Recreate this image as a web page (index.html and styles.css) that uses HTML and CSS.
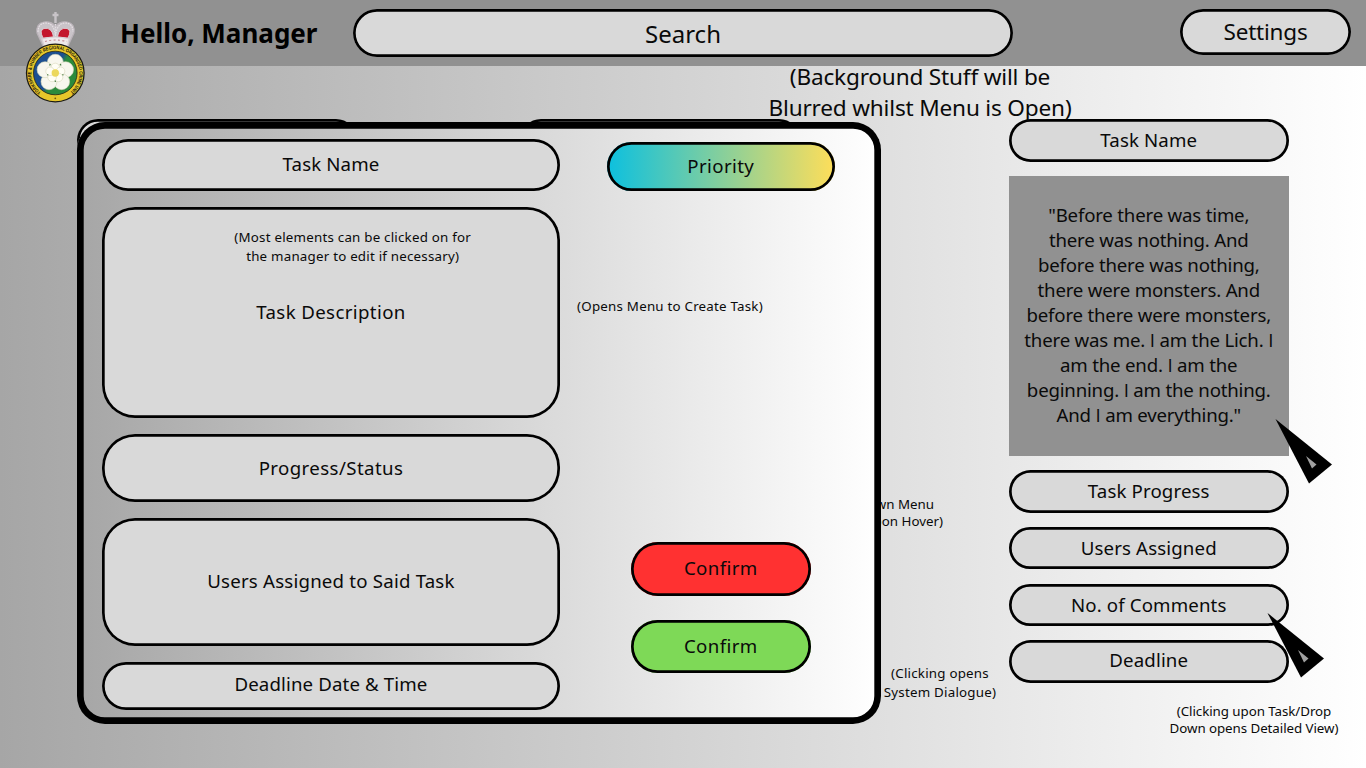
FILE: index.html
```html
<!DOCTYPE html>
<html lang="en">
<head>
<meta charset="utf-8">
<title>Manager Dashboard</title>
<link rel="stylesheet" href="styles.css">
</head>
<body>
<header class="topbar">
  <svg class="crest" viewBox="0 0 64 96" width="64" height="96">
    <defs>
      <path id="ring" d="M17 84.4 A24 24 0 1 1 45.600 84.4"/>
      <clipPath id="disc"><circle cx="31.3" cy="65" r="21"/></clipPath>
      <linearGradient id="field" x1="0" x2="1" y1=".2" y2=".8">
        <stop offset=".45" stop-color="#1d4f91"/><stop offset=".55" stop-color="#2c8a3c"/>
      </linearGradient>
    </defs>
    <g stroke="#b9b2b8" stroke-width="1.2">
      <path fill="#c9c3c8" d="M19 38 L13 25 Q11.500 15.500 20 14 Q27 13 31.5 18 Q36 13 43 14 Q51.500 15.500 50 25 L44 38 Z"/>
      <path fill="#c3162c" stroke="#ded8dc" stroke-width=".8" d="M19 30 Q15 22 20 20.500 Q28 19 29.500 29 Z M44 30 Q48 22 43 20.500 Q35 19 33.500 29 Z"/>
      <path fill="none" stroke="#e5e0e4" stroke-dasharray="1.6 1" d="M14 24 Q14 15 22 15 Q30 15 31.5 28 Q33 15 41 15 Q49 15 49 24 M31.5 16 V34"/>
      <path stroke="#c8c4c8" stroke-width="2.400" d="M31.5 4 V15 M28.5 7 H34.5"/>
      <path fill="#eee8ea" stroke="#d8d0d4" d="M18 31 Q31 27 45 31 L43.500 38 Q31 34.500 20 38 Z"/>
    </g>
    <path d="M21 33.500 Q31 30.500 43 33.500" fill="none" stroke="#c58c96" stroke-width="1.2" stroke-dasharray="2 2.400"/>
    <circle cx="31.3" cy="65" r="28.800" fill="#e6c62a" stroke="#1b1a12" stroke-width="1.300"/>
    <circle cx="31.3" cy="65" r="21.8" fill="url(#field)" stroke="#252515" stroke-width=".8"/>
    <g clip-path="url(#disc)">
      <g fill="#f8f7ee" stroke="#d5d8b8" stroke-width=".6">
        <circle cx="31.300" cy="54.3" r="8"/><circle cx="41.5" cy="61.7" r="8"/>
        <circle cx="37.6" cy="73.700" r="8"/><circle cx="25" cy="73.700" r="8"/>
        <circle cx="21.100" cy="61.7" r="8"/>
      </g>
      <g fill="#fffef5" stroke="#d8d9bc" stroke-width=".6">
        <circle cx="31.300" cy="59.5" r="4.300"/><circle cx="36.5" cy="63.300" r="4.300"/>
        <circle cx="34.5" cy="69.400" r="4.300"/><circle cx="28.100" cy="69.400" r="4.300"/>
        <circle cx="26.100" cy="63.300" r="4.300"/>
      </g>
      <g stroke="#4b7d45" stroke-width="1.200">
        <path d="M36.300 56 L37 57.500 M39.500 67 L38.300 66.700 M31.300 74 V72.500 M23.100 67 L24.300 66.700 M26.300 56 L25.600 57.500"/>
      </g>
      <circle cx="31.3" cy="65" r="3.700" fill="#ecd85d"/>
    </g>
    <text class="crest-text"><textPath href="#ring" textLength="119" lengthAdjust="spacingAndGlyphs">YORKSHIRE &amp; HUMBER REGIONAL ORGANISED CRIME UNIT</textPath></text>
    <circle cx="31.3" cy="90.3" r=".9" fill="#6b5c12"/>
  </svg>
  <h1 class="greeting">Hello, Manager</h1>
  <div class="pill search">Search</div>
  <div class="pill settings">Settings</div>
</header>

<main class="board">
  <div class="pill task-head task-head-first"></div>
  <div class="pill task-head task-head-second"></div>
  <p class="note note-hover">Down Menu<br><span class="hover-end">upon Hover)</span></p>
  <p class="note note-dialogue">(Clicking opens<br>System Dialogue)</p>
  <p class="note note-blur">(Background Stuff will be<br>Blurred whilst Menu is Open)</p>

  <section class="task">
    <div class="pill row">Task Name</div>
    <blockquote class="quote">"Before there was time,<br>there was nothing. And<br>before there was nothing,<br>there were monsters. And<br>before there were monsters,<br>there was me. <span class="plain">I</span> am the Lich. <span class="plain">I</span><br>am the end. <span class="plain">I</span> am the<br>beginning. <span class="plain">I</span> am the nothing.<br>And <span class="plain">I</span> am everything."</blockquote>
    <div class="pill row">Task Progress</div>
    <div class="pill row">Users Assigned</div>
    <div class="pill row row-comments">No. of Comments</div>
    <div class="pill row row-deadline">Deadline</div>
  </section>
  <p class="note note-detail">(Clicking upon Task/Drop<br>Down opens Detailed View)</p>

  <svg class="cursor cursor-quote" viewBox="0 0 58 66" width="58" height="66"><path d="M.5 0 L57 45.500 L34 64.500 Z"/><path class="cursor-hole" d="M31 37 L41.500 45.500 L37 49.500 Z"/></svg>
  <svg class="cursor cursor-comments" viewBox="0 0 58 66" width="58" height="66"><path d="M.5 0 L57 45.500 L34 64.500 Z"/><path class="cursor-hole" d="M31 37 L41.500 45.500 L37 49.500 Z"/></svg>
</main>

<section class="dialog">
  <div class="fields">
    <div class="pill field name">Task Name</div>
    <div class="pill field description">
      <p class="note note-edit">(Most elements can be clicked on for<br>the manager to edit if necessary)</p>
      Task Description
    </div>
    <div class="pill field progress">Progress/Status</div>
    <div class="pill field users">Users Assigned to Said Task</div>
    <div class="pill field deadline">Deadline Date &amp; Time</div>
  </div>
  <div class="actions">
    <div class="pill priority">Priority</div>
    <div class="pill confirm confirm-red">Confirm</div>
    <div class="pill confirm confirm-green">Confirm</div>
  </div>
  <p class="note note-create">(Opens Menu to Create Task)</p>
</section>
</body>
</html>
```
FILE: styles.css
```css
* { box-sizing: border-box; }

body {
  margin: 0;
  width: 1366px;
  height: 768px;
  position: relative;
  overflow: hidden;
  background: linear-gradient(90deg, #a6a6a6, #fff);
  color: #0a0a0a;
  font-family: "Noto Sans", "Open Sans", sans-serif;
  font-size: 18.67px;
}

.pill {
  display: flex;
  align-items: center;
  justify-content: center;
  padding-bottom: 2px;
  background: #d9d9d9;
  border-radius: 33px;
  box-shadow: inset 0 0 0 2.7px #000;
  letter-spacing: .13px;
  white-space: nowrap;
}

.topbar {
  height: 66px;
  display: flex;
  align-items: flex-start;
  padding: 9px 15px 0 24px;
  background: #919191;
}
.crest { flex: none; margin-top: -1px; }
.crest-text { font: 700 5px "Liberation Sans", sans-serif; fill: #17150c; }
.greeting {
  width: 264.7px;
  margin: 0;
  padding-left: 32px;
  color: #000;
  font-size: 26px;
  line-height: 48px;
  font-weight: 700;
  white-space: nowrap;
}
.search { width: 660.6px; height: 48px; padding-bottom: 0; font-size: 24px; letter-spacing: 0; }
.settings { width: 171px; height: 46px; margin-left: auto; font-size: 22.5px; letter-spacing: -.2px; }

.board { padding: 53px 0 0 1008.5px; }
.task { width: 280.5px; display: flex; flex-direction: column; gap: 14.3px; }
.row { height: 42.5px; }
.row-comments { padding-bottom: 0; }
.row-deadline { padding-bottom: 4px; }
.quote {
  height: 280px;
  margin: 0;
  padding-top: 26.5px;
  background: #919191;
  line-height: 25px;
  letter-spacing: -.2px;
  text-align: center;
  white-space: nowrap;
}
.plain { font-family: "Open Sans", sans-serif; line-height: 1; }

.note {
  position: absolute;
  margin: 0;
  font-size: 13.33px;
  line-height: 17px;
  letter-spacing: .22px;
  text-align: center;
  white-space: nowrap;
}
.note-blur { left: 720px; top: 61px; width: 400px; font-size: 22.6px; line-height: 31px; letter-spacing: -.18px; }
.note-hover { right: 432px; top: 496px; letter-spacing: 0; text-align: right; }
.hover-end { margin-right: -9px; }
.note-dialogue { left: 840px; top: 664px; width: 200px; line-height: 19px; }
.note-detail { left: 1154px; top: 703px; width: 200px; letter-spacing: -.06px; }

.task-head { position: absolute; top: 119px; height: 42px; }
.task-head-first { left: 77px; width: 280px; }
.task-head-second { left: 520px; width: 280px; }

.cursor { position: absolute; }
.cursor-quote { left: 1275px; top: 419px; }
.cursor-comments { left: 1266.500px; top: 613px; }
.cursor-hole { fill: #a0a0a0; }

.dialog {
  position: absolute;
  left: 77px;
  top: 122px;
  width: 803.5px;
  height: 602.3px;
  padding: 16.7px 46px 14px 24.7px;
  display: flex;
  justify-content: space-between;
  border-radius: 28px;
  background: linear-gradient(90deg, #a6a6a6, #fff);
  box-shadow: inset 0 0 0 6.7px #000;
}
.fields { width: 458.6px; display: flex; flex-direction: column; gap: 16px; }
.name { height: 52.3px; }
.description { position: relative; height: 211px; letter-spacing: .37px; }
.note-edit { left: 101px; top: 21px; width: 300px; line-height: 19px; }
.progress { height: 68px; padding-bottom: 0; letter-spacing: .4px; }
.users { height: 128px; letter-spacing: .2px; }
.deadline { height: 48px; padding-bottom: 4px; }
.actions {
  width: 227.5px;
  padding-top: 3.6px;
  display: flex;
  flex-direction: column;
  align-items: center;
}
.priority {
  width: 227.5px;
  height: 49px;
  background: linear-gradient(90deg, #0cc0df, #ffde59);
  letter-spacing: .4px;
}
.confirm { width: 180.5px; height: 53.3px; letter-spacing: .37px; }
.confirm-red { margin-top: 351px; background: #ff3131; }
.confirm-green { margin-top: 24.4px; background: #7ed957; }
.note-create { left: 493px; top: 176px; width: 200px; }
```
